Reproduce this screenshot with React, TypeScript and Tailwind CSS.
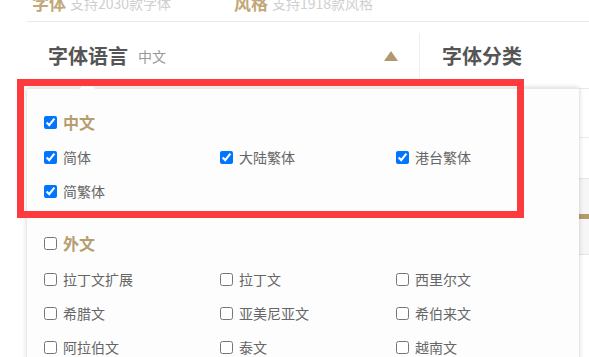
import React from "react";

const Check = ({ label, checked }: { label: string; checked?: boolean }) => (
  <label className="flex h-5 items-center gap-[6px] text-[14px] text-[#666]">
    <input type="checkbox" defaultChecked={checked} className="m-0 h-[13px] w-[13px] accent-[#0075ff]" />
    <span>{label}</span>
  </label>
);

const Section = ({ title, checked, items, className }: { title: string; checked?: boolean; items: string[]; className?: string }) => (
  <div className={className}>
    <label className="flex h-6 items-center gap-[6px]">
      <input type="checkbox" defaultChecked={checked} className="m-0 h-[13px] w-[13px] accent-[#0075ff]" />
      <span className="text-[16px] font-bold text-[#b59d70]">{title}</span>
    </label>
    <div className={`grid grid-cols-[176px_176px_176px] gap-y-[14px] ${checked ? "mt-[13px]" : "mt-[14px]"}`}>
      {items.map((it) => (
        <Check key={it} label={it} checked={checked} />
      ))}
    </div>
  </div>
);

export default function App() {
  return (
    <div className="relative h-[357px] w-[589px] overflow-hidden bg-white font-['Noto_Sans_CJK_SC','Noto_Sans',sans-serif]">
      <div className="pl-[27px]">
        {/* strip cut off at top */}
        <div className="flex h-[22px] border-b border-[#eeebe2]">
          <div className="-mt-[16px] flex w-[207px] items-center gap-1 pl-[5px] leading-5">
            <span className="text-[17px] font-bold text-[#c2a878]">字体</span>
            <span className="text-[14px] text-[#cfcfcf]">支持2030款字体</span>
          </div>
          <div className="-mt-[16px] flex items-center gap-1 leading-5">
            <span className="text-[17px] font-bold text-[#c2a878]">风格</span>
            <span className="text-[14px] text-[#cfcfcf]">支持1918款风格</span>
          </div>
        </div>

        {/* filter header */}
        <div className="flex h-[67px] items-center border-b border-[#eeeae0]">
          <div className="flex w-[392px] items-center justify-between px-[21px] pt-[2px]">
            <div className="flex items-center gap-[10px]">
              <span className="text-[20px] font-bold text-[#555]">字体语言</span>
              <span className="text-[14px] text-[#999]">中文</span>
            </div>
            <span className="h-0 w-0 border-b-[10px] border-l-[7px] border-r-[7px] border-b-[#b09a6c] border-l-transparent border-r-transparent" />
          </div>
          <div className="h-[45px] w-px bg-[#eeeeee]" />
          <div className="pl-[22px] pt-[2px] text-[20px] font-bold text-[#555]">字体分类</div>
        </div>

        {/* page content behind the dropdown */}
        <div className="h-[49px] border-b border-[#f0ece2]" />
        <div className="h-[41px] border-b border-[#e8e8e8]" />
        <div className="h-[75px] bg-[#f6f6f6] pt-[35px]">
          <div className="h-[5px] bg-[#b39b6e]" />
        </div>
        <div className="h-px bg-[#e6e6e6]" />
      </div>

      {/* dropdown panel */}
      <div className="absolute left-[27px] top-[88px] h-[290px] w-[552px] border-t border-[#ece8dd] bg-[#fdfdfd] px-[17px] pt-[21px] shadow-[0_0_5px_rgba(0,0,0,0.2)]">
        <div className="absolute left-[55px] top-[-6px] h-[11px] w-[11px] rotate-45 bg-[#fdfdfd]" />
        <Section title="中文" checked items={["简体", "大陆繁体", "港台繁体", "简繁体"]} />
        <Section
          className="mt-[30px]"
          title="外文"
          items={["拉丁文扩展", "拉丁文", "西里尔文", "希腊文", "亚美尼亚文", "希伯来文", "阿拉伯文", "泰文", "越南文"]}
        />
      </div>

      {/* annotation box */}
      <div className="pointer-events-none absolute left-[17px] top-[79px] h-[139px] w-[507px] border-[7px] border-[#fd3a3d]" />
    </div>
  );
}
